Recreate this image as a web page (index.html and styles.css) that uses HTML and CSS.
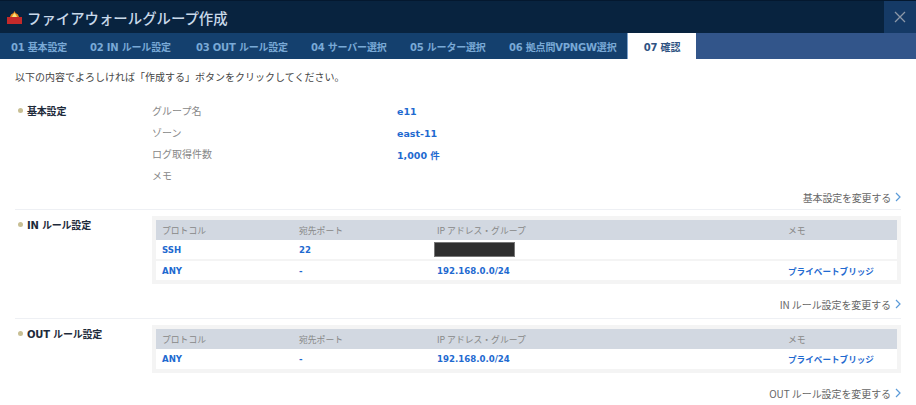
FILE: index.html
```html
<!DOCTYPE html>
<html lang="ja">
<head>
<meta charset="utf-8">
<title>ファイアウォールグループ作成</title>
<link rel="stylesheet" href="styles.css">
</head>
<body>
<header class="titlebar">
  <svg class="logo" width="15" height="13" viewBox="0 0 15 13">
    <path d="M7.500 0 L8.500 2 L11 3.500 L12 6 L3 6 L4 3.500 L6.500 2 Z" fill="#e8871e"/>
    <path d="M7.500 2 L9 4 L10 6 L5 6 L6 4 Z" fill="#f8e27a"/>
    <rect x="0" y="6" width="15" height="7" fill="#c42a2a"/>
  </svg>
  <h1 class="title">ファイアウォールグループ作成</h1>
  <button class="close" aria-label="閉じる">
    <svg width="12" height="12" viewBox="0 0 12 12"><path d="M1 1 L11 11 M11 1 L1 11" stroke="#8c98a8" stroke-width="1.300" fill="none"/></svg>
  </button>
</header>
<nav class="tabs">
  <a class="tab t1">01 基本設定</a>
  <a class="tab t2">02 IN ルール設定</a>
  <a class="tab t3">03 OUT ルール設定</a>
  <a class="tab t4">04 サーバー選択</a>
  <a class="tab t5">05 ルーター選択</a>
  <a class="tab t6">06 拠点間VPNGW選択</a>
  <a class="tab active">07 確認</a>
  <div class="tabs-rest"></div>
</nav>
<main class="main">
  <p class="intro">以下の内容でよろしければ「作成する」ボタンをクリックしてください。</p>

  <section class="section basic">
    <div class="row-top">
      <h2 class="label">基本設定</h2>
      <dl class="details">
        <dt>グループ名</dt><dd>e11</dd>
        <dt>ゾーン</dt><dd>east-11</dd>
        <dt>ログ取得件数</dt><dd>1,000 件</dd>
        <dt>メモ</dt><dd></dd>
      </dl>
    </div>
    <a class="change">基本設定を変更する<svg class="chev" width="6" height="10" viewBox="0 0 6 10"><path d="M1 1 L5 5 L1 9" stroke="#5b9bd8" stroke-width="1.200" fill="none"/></svg></a>
  </section>

  <section class="section">
    <div class="row-top">
      <h2 class="label">IN ルール設定</h2>
      <div class="table-wrap">
        <table class="rules">
          <thead><tr><th class="c1">プロトコル</th><th class="c2">宛先ポート</th><th class="c3">IP アドレス・グループ</th><th>メモ</th></tr></thead>
          <tbody>
            <tr><td>SSH</td><td>22</td><td><span class="redact"></span></td><td></td></tr>
            <tr><td>ANY</td><td>-</td><td>192.168.0.0/24</td><td>プライベートブリッジ</td></tr>
          </tbody>
        </table>
      </div>
    </div>
    <a class="change">IN ルール設定を変更する<svg class="chev" width="6" height="10" viewBox="0 0 6 10"><path d="M1 1 L5 5 L1 9" stroke="#5b9bd8" stroke-width="1.200" fill="none"/></svg></a>
  </section>

  <section class="section last">
    <div class="row-top">
      <h2 class="label">OUT ルール設定</h2>
      <div class="table-wrap">
        <table class="rules">
          <thead><tr><th class="c1">プロトコル</th><th class="c2">宛先ポート</th><th class="c3">IP アドレス・グループ</th><th>メモ</th></tr></thead>
          <tbody>
            <tr><td>ANY</td><td>-</td><td>192.168.0.0/24</td><td>プライベートブリッジ</td></tr>
          </tbody>
        </table>
      </div>
    </div>
    <a class="change">OUT ルール設定を変更する<svg class="chev" width="6" height="10" viewBox="0 0 6 10"><path d="M1 1 L5 5 L1 9" stroke="#5b9bd8" stroke-width="1.200" fill="none"/></svg></a>
  </section>
</main>
</body>
</html>
```
FILE: styles.css
```css
* { box-sizing: border-box; }
html, body { margin: 0; padding: 0; }
body {
  width: 916px;
  height: 405px;
  overflow: hidden;
  background: #fff;
  font-family: "DejaVu Sans", "Noto Sans CJK JP", sans-serif;
  font-size: 10px;
  color: #444;
}
.titlebar {
  height: 33px;
  display: flex;
  align-items: center;
  background: #08233f;
  border-top: 1px solid #04182f;
  padding-left: 7px;
}
.logo { flex: none; margin-right: 5px; margin-top: 1px; }
.title {
  margin: 0;
  flex: 1;
  font-family: "Noto Sans CJK JP", sans-serif;
  font-size: 14.400px;
  font-weight: 500;
  color: #c9d9ea;
}
.close {
  width: 32px;
  height: 32px;
  border: 0;
  padding: 0;
  background: #153a66;
  display: flex;
  align-items: center;
  justify-content: center;
}
.tabs {
  height: 26px;
  display: flex;
  background: #14406e;
}
.tab {
  display: flex;
  align-items: center;
  font-size: 10px;
  font-weight: 700;
  color: #79a9d6;
  white-space: nowrap;
  letter-spacing: -0.200px;
  padding-left: 11px;
}
.t1 { width: 79px; }
.t2 { width: 106px; }
.t3 { width: 115px; }
.t4 { width: 99px; }
.t5 { width: 99px; }
.t6 { width: 130px; padding-left: 11px; border-right: 1px solid #7ea3cc; }
.tab.active {
  width: 68px;
  justify-content: center;
  padding: 0;
  background: #fff;
  color: #2f5383;
}
.tabs-rest { flex: 1; background: #32558a; }
.main { padding: 0 15px; }
.intro {
  margin: 0;
  height: 37px;
  padding-top: 11px;
  line-height: 14px;
  font-family: "Noto Sans CJK JP", sans-serif;
  font-size: 10px;
  color: #444;
}
.section { border-bottom: 1px solid #eef0f4; }
.section.last { border-bottom: 0; }
.basic { padding-top: 5px; height: 114px; }
.section:not(.basic) { padding-top: 6px; }
.section:not(.basic):not(.last) { height: 109px; }
.row-top { display: flex; align-items: flex-start; }
.label {
  width: 137px;
  margin: 0;
  flex: none;
  display: flex;
  align-items: center;
  font-size: 10px;
  font-weight: 700;
  letter-spacing: -0.200px;
  color: #1d2a3a;
  height: 16px;
  white-space: nowrap;
}
.basic .label { margin-top: 1px; }
.label::before {
  content: "";
  width: 5px;
  height: 5px;
  border-radius: 50%;
  background: #c8bf94;
  margin: 1px 4px 0 3px;
}
.details {
  margin: 0;
  display: grid;
  grid-template-columns: 245px 1fr;
  grid-auto-rows: 21.500px;
  align-items: center;
}
.details dt {
  font-family: "Noto Sans CJK JP", sans-serif;
  font-size: 10px;
  color: #888;
  padding-bottom: 2px;
}
.details dd {
  margin: 0;
  font-weight: 700;
  color: #1f6ad0;
  font-size: 9.500px;
}
.change {
  display: flex;
  justify-content: flex-end;
  align-items: center;
  height: 14px;
  font-family: "Noto Sans CJK JP", sans-serif;
  font-size: 10px;
  color: #666;
  letter-spacing: -0.200px;
}
.basic .change { margin-top: 3px; }
.section:not(.basic) .change { margin-top: 13px; letter-spacing: -0.080px; }
.chev { margin-left: 4px; }
.table-wrap {
  flex: 1;
  background: #f4f4f4;
  padding: 4px;
}
.rules {
  width: 741px;
  border-collapse: collapse;
  table-layout: fixed;
  background: #fff;
}
.c1 { width: 137px; }
.c2 { width: 138px; }
.c3 { width: 351px; }
.rules th {
  height: 20px;
  padding: 0 0 0 6px;
  background: #d2d8e1;
  font-family: "Noto Sans CJK JP", sans-serif;
  font-size: 8.800px;
  font-weight: 400;
  color: #888;
  text-align: left;
}
.rules td {
  height: 20px;
  padding: 0 0 0 6px;
  font-size: 8.600px;
  font-weight: 700;
  color: #1f6ad0;
  border-top: 2px solid #f4f4f4;
  white-space: nowrap;
}
.rules tbody tr:first-child td { border-top: 0; }
.redact {
  display: block;
  width: 81px;
  height: 15px;
  margin-left: -3px;
  background: #2e2e2e;
  border: 1px solid #777;
}
```
